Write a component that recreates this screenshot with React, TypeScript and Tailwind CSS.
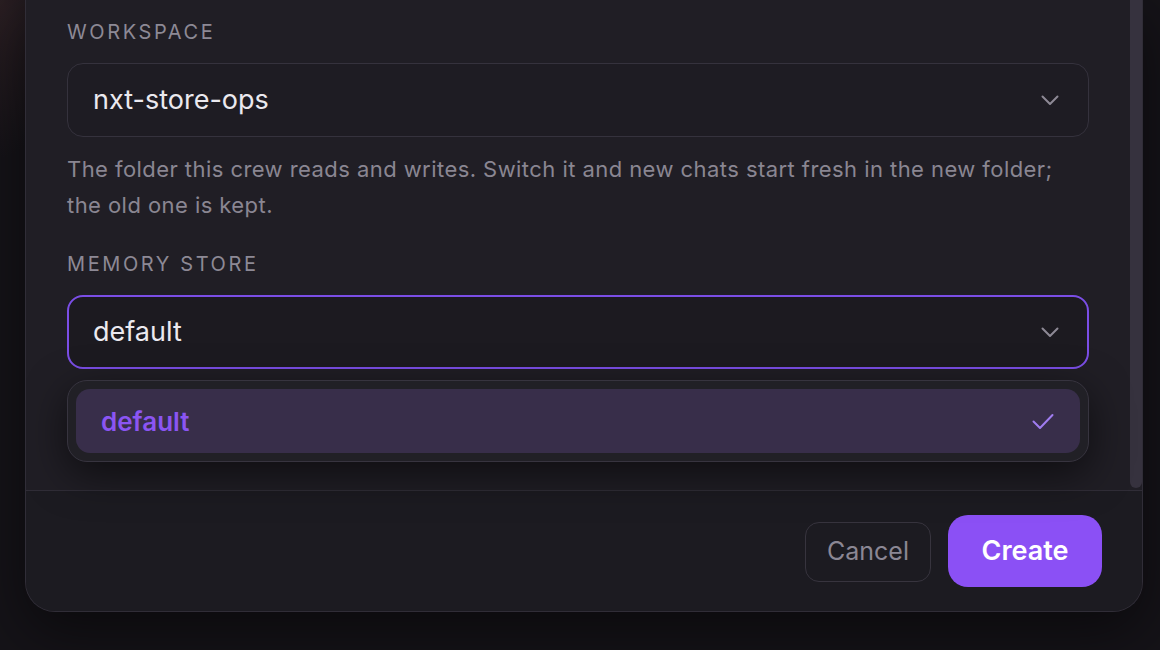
const font = { fontFamily: 'Inter, "Noto Sans", sans-serif' };

function FieldLabel({ children, className = '' }: { children: React.ReactNode; className?: string }) {
    return (
        <p className={`text-[20px] leading-[24px] tracking-[0.13em] text-[#8d8995] ${className}`}>{children}</p>
    );
}

function Chevron() {
    return (
        <svg width="18" height="11" viewBox="0 0 18 11" fill="none" className="text-[#8d8995]">
            <polyline points="1.5,1.5 9,9 16.5,1.5" stroke="currentColor" strokeWidth="2" strokeLinecap="round" strokeLinejoin="round" />
        </svg>
    );
}

export default function App() {
    return (
        <div className="w-[1160px] h-[650px] overflow-hidden bg-[#151318] relative" style={font}>
            {/* faint backdrop glow at top-left */}
            <div className="absolute left-0 top-0 w-[60px] h-[160px] bg-[radial-gradient(ellipse_at_top_left,#2a1e22_0%,transparent_70%)]" />

            <div className="relative ml-[25px] w-[1118px] rounded-b-[30px] border border-t-0 border-[#302d37] bg-[#201e25] shadow-[0_20px_60px_rgba(0,0,0,0.5)] flex flex-col overflow-hidden">
                {/* Body */}
                <div className="h-[490px] flex">
                    <div className="flex-1 px-[41px] pt-[20px]">
                        <FieldLabel>WORKSPACE</FieldLabel>
                        <button className="mt-[19px] w-full h-[74px] rounded-[16px] border border-[#35323d] bg-[#1e1c23] pl-[25px] pr-[29px] flex items-center justify-between">
                            <span className="text-[27px] text-[#ebe9ef]">nxt-store-ops</span>
                            <Chevron />
                        </button>
                        <p className="mt-[14px] text-[22px] leading-[36px] tracking-[0.02em] text-[#8a8692]">
                            The folder this crew reads and writes. Switch it and new chats start fresh in the new folder; the old one is kept.
                        </p>

                        <FieldLabel className="mt-[29px]">MEMORY STORE</FieldLabel>
                        <div className="relative mt-[19px]">
                            <button className="w-full h-[74px] rounded-[16px] border-2 border-[#7b4ee6] bg-[#1c1a20] pl-[24px] pr-[28px] flex items-center justify-between">
                                <span className="text-[27px] text-[#ebe9ef]">default</span>
                                <Chevron />
                            </button>

                            {/* Open listbox */}
                            <div className="absolute left-0 right-0 top-[85px] rounded-[20px] border border-[#37343f] bg-[#212026] p-[8px] shadow-[0_12px_40px_rgba(0,0,0,0.55)]">
                                <div className="h-[64px] rounded-[14px] bg-[#382e4a] pl-[25px] pr-[26px] flex items-center justify-between">
                                    <span className="text-[26px] font-semibold text-[#8b55f2]">default</span>
                                    <svg width="22" height="17" viewBox="0 0 22 17" fill="none" className="text-[#a07df0]">
                                        <polyline points="1.5,8.5 8,15 20.5,2" stroke="currentColor" strokeWidth="2" strokeLinecap="round" strokeLinejoin="round" />
                                    </svg>
                                </div>
                            </div>
                        </div>
                    </div>
                    {/* Scrollbar */}
                    <div className="w-[12px] pb-[2px]">
                        <div className="h-full rounded-b-full bg-[#36323e]" />
                    </div>
                </div>

                {/* Footer */}
                <div className="h-[121px] border-t border-[#302d37] bg-[#1c1b21] pr-[40px] flex items-center justify-end gap-[17px]">
                    <button className="h-[60px] w-[126px] rounded-[14px] border border-[#37343e] text-[25px] text-[#8b8794] mt-[2px]">
                        Cancel
                    </button>
                    <button className="h-[72px] w-[154px] rounded-[20px] bg-[#8b50f5] text-[27px] font-semibold text-white">
                        Create
                    </button>
                </div>
            </div>
        </div>
    );
}
